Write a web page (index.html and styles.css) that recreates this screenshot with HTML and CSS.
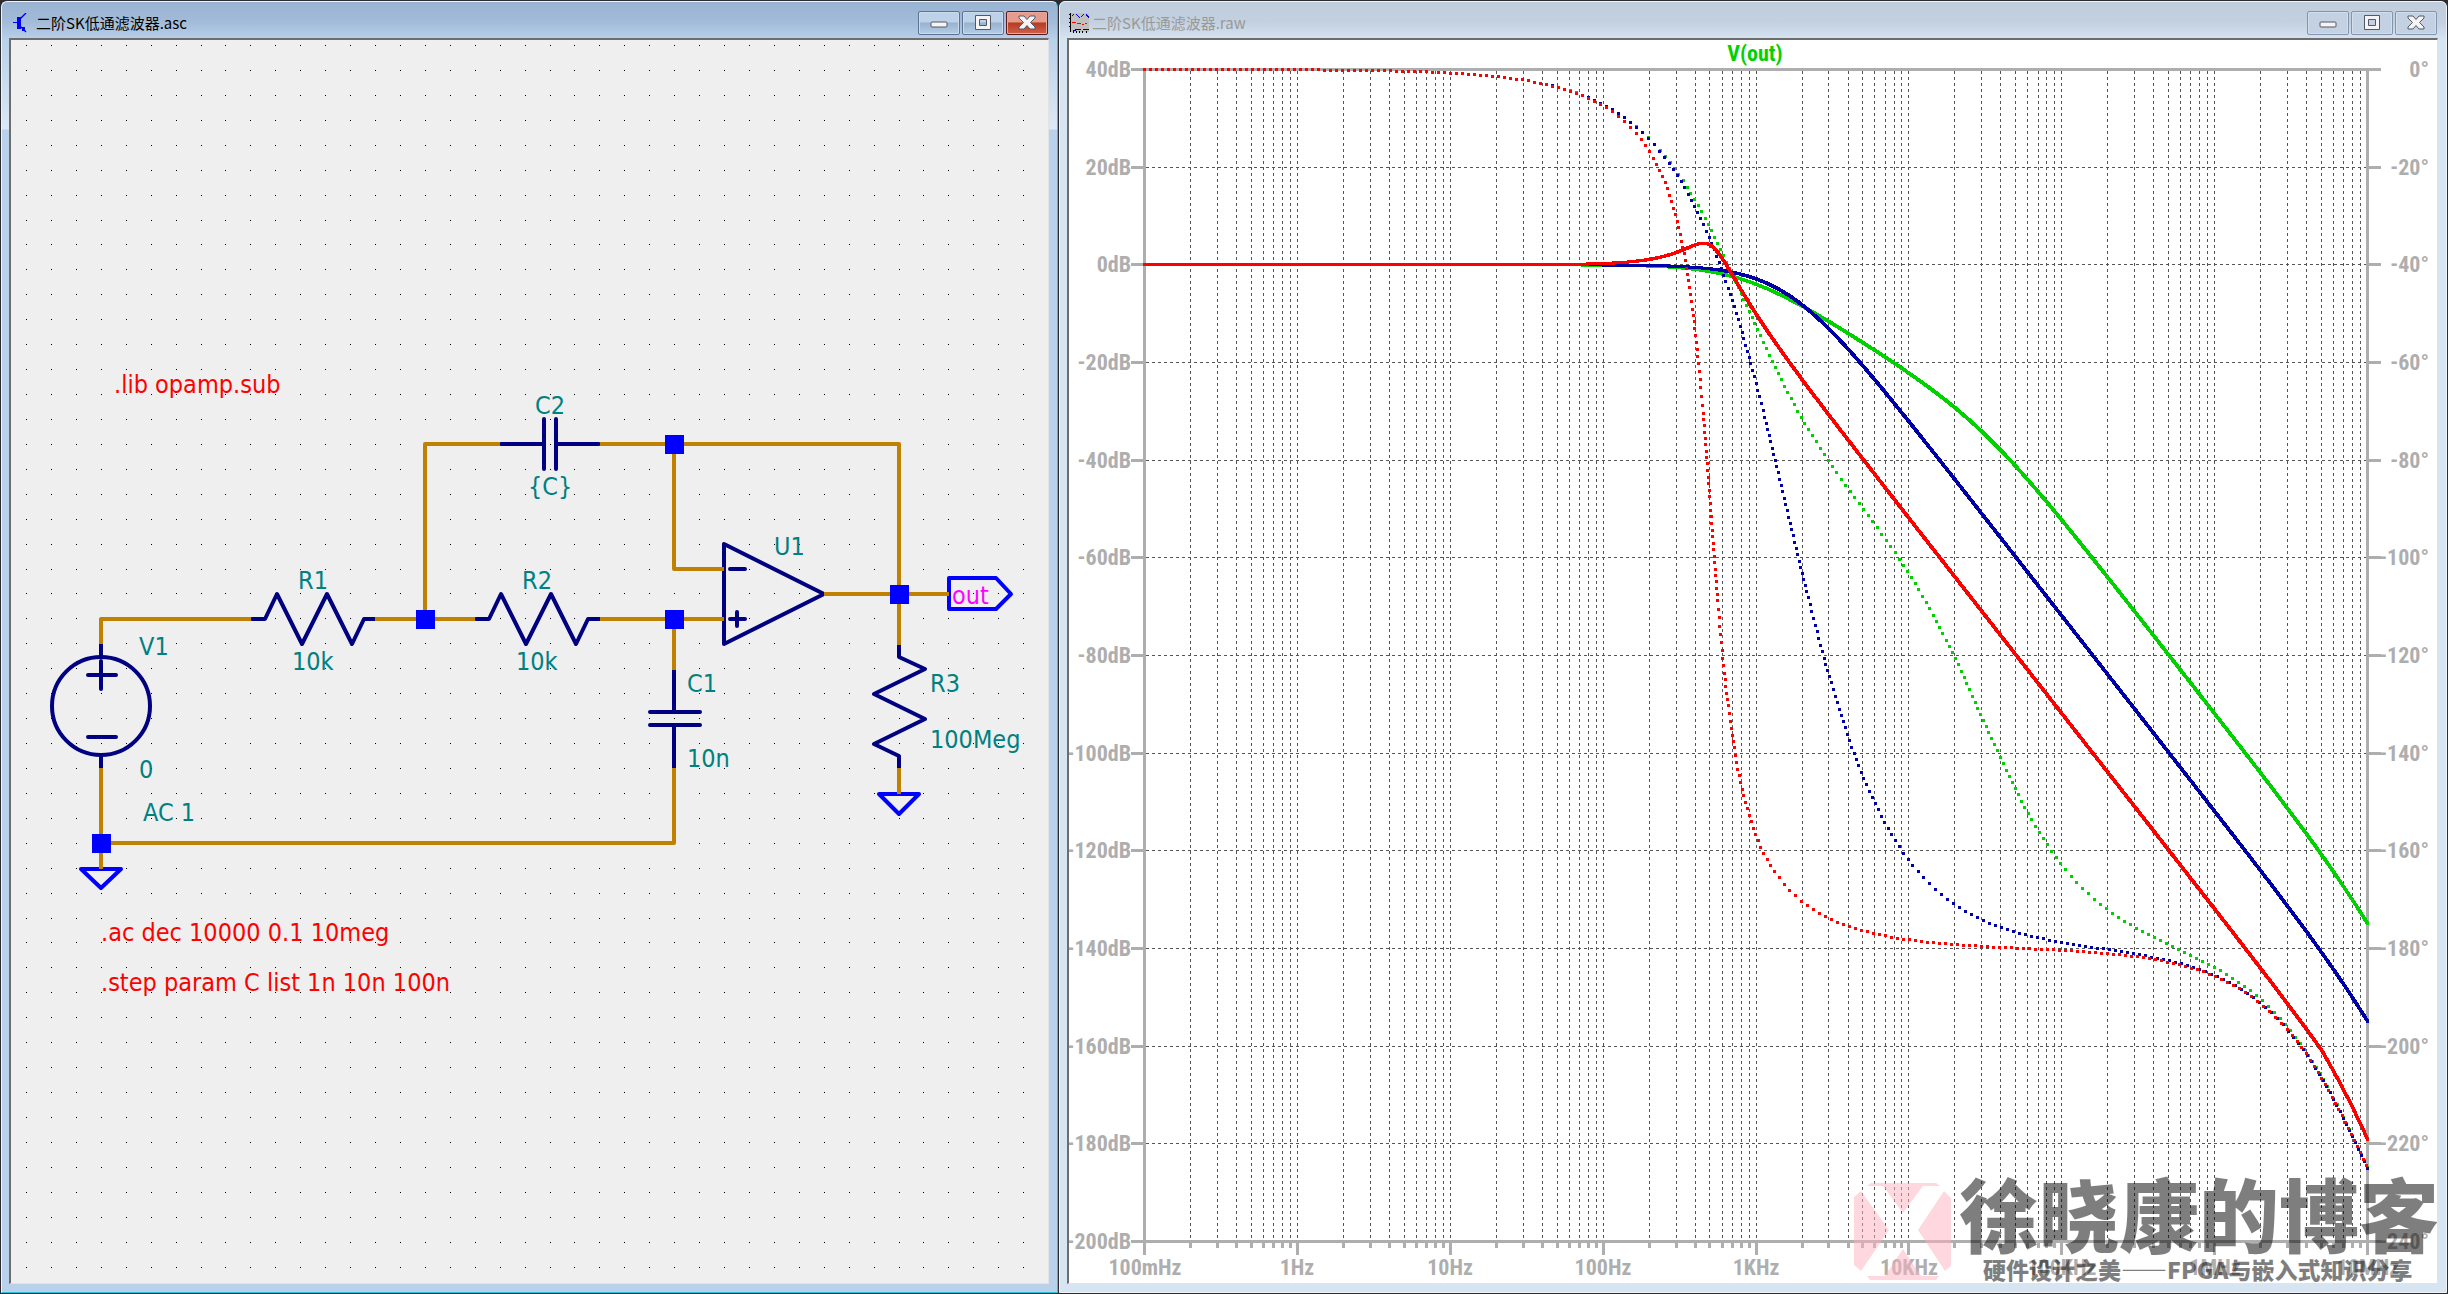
FILE: index.html
```html
<!DOCTYPE html>
<html lang="zh-CN">
<head>
<meta charset="utf-8">
<title>二阶SK低通滤波器</title>
<link rel="stylesheet" href="styles.css">
</head>
<body>
<main class="desktop">
  <section class="window window-active" aria-label="Schematic">
    <header class="titlebar">
      <svg class="title-icon" viewBox="0 0 20 20" aria-hidden="true"><path d="M4 4h4v12h-4zM0 9h4v1h-4z" fill="#00f"/><path d="M7 6l6-6M7 13l6 6" stroke="#00f" stroke-width="1.4" fill="none"/><path d="M9 14h3v4h-3z" fill="#00f"/></svg>
      <h1 class="title">二阶SK低通滤波器.asc</h1>
      <div class="controls">
        <button class="control" type="button" aria-label="Minimize"><svg viewBox="0 0 20 20"><rect class="glyph" x="2" y="9" width="16" height="5" rx="1"/></svg></button>
        <button class="control" type="button" aria-label="Maximize"><svg viewBox="0 0 20 20"><path class="glyph" fill-rule="evenodd" d="M2.500 2.500h15v14h-15zM6.500 6.500v6h7v-6z"/></svg></button>
        <button class="control control-close" type="button" aria-label="Close"><svg viewBox="0 0 20 20"><path class="glyph" d="M2 3h5l3 3.500 3-3.500h5v2l-4.500 4.500 4.500 4.500v2h-5l-3-3.500-3 3.500h-5v-2l4.500-4.500-4.500-4.500z"/></svg></button>
      </div>
    </header>
    <svg class="canvas schematic" viewBox="11 40 1037 1243" role="img" aria-label="Sallen-Key low-pass filter">
      <g id="dots"></g>
      <g class="symbol">
        <circle cx="101" cy="706" r="49"/>
        <path d="M101 644v13M101 755v13M88 675h28M101 661v28M88 737h28"/>
        <path d="M252 619h13l12-25 25 50 25-50 25 50 12-25h11"/>
        <path d="M476 619h13l12-25 25 50 25-50 25 50 12-25h12"/>
        <path d="M501 444h43M556 444h43M544 419v50M556 419v50"/>
        <path d="M674 670v42M674 725v43M650 712h50M650 725h50"/>
        <path d="M724 544v100l100-50z"/>
        <path d="M730 569h15M730 619h15M737 612v14"/>
        <path d="M899 645v12l26 12-51 25 51 25-51 25 25 12v13"/>
      </g>
      <g class="port">
        <path d="M81 869h40l-20 19z"/>
        <path d="M879 794h40l-20 20z"/>
        <path d="M949 578h47l15 16-15 15h-47z"/>
      </g>
      <g class="wire">
        <path d="M251 619H101V644M101 768V869M101 843H674V768M375 619H475M425 619V444H500M600 444H899V645M674 444V569H724M600 619H724M674 619V670M824 594H949M899 768V794"/>
      </g>
      <g class="junction">
        <rect x="416" y="610" width="19" height="19"/>
        <rect x="665" y="435" width="19" height="19"/>
        <rect x="665" y="610" width="19" height="19"/>
        <rect x="890" y="585" width="19" height="19"/>
        <rect x="92" y="834" width="19" height="19"/>
      </g>
      <g class="label">
        <text x="139" y="655">V1</text>
        <text x="139" y="778">0</text>
        <text x="143" y="821">AC 1</text>
        <text x="298" y="589">R1</text>
        <text x="292" y="670">10k</text>
        <text x="522" y="589">R2</text>
        <text x="516" y="670">10k</text>
        <text x="535" y="414">C2</text>
        <text x="528" y="495">{C}</text>
        <text x="774" y="555">U1</text>
        <text x="687" y="692">C1</text>
        <text x="687" y="767">10n</text>
        <text x="930" y="692">R3</text>
        <text x="930" y="748">100Meg</text>
      </g>
      <g class="directive">
        <text x="114" y="393">.lib opamp.sub</text>
        <text x="101" y="941">.ac dec 10000 0.1 10meg</text>
        <text x="101" y="991">.step param C list 1n 10n 100n</text>
      </g>
      <text class="net" x="952" y="604">out</text>
    </svg>
  </section>

  <section class="window" aria-label="Waveform">
    <header class="titlebar">
      <svg class="title-icon" viewBox="0 0 20 20" shape-rendering="crispEdges" aria-hidden="true"><rect x="1" width="19" height="19" fill="#c0c0c0"/><path d="M0 1h2v1h-2zM0 5h2v1h-2zM0 9h2v1h-2zM0 13h2v1h-2zM1 0h1v19h-1zM4 18h1v2h-1zM7 18h1v2h-1zM10 18h1v2h-1zM13 18h1v2h-1zM17 18h1v2h-1z" fill="#000"/><path d="M3 3l2-2M7 1l4 4M12 4l3-3M17 1l3 4" fill="none" stroke="#00f"/><path d="M3 9h4M8 10l4 1M13 11h2M16 11l2-1" fill="none" stroke="#f00"/><path d="M4 18l5-2h3M14 16h6" fill="none" stroke="#000080"/></svg>
      <h2 class="title">二阶SK低通滤波器.raw</h2>
      <div class="controls">
        <button class="control" type="button" aria-label="Minimize"><svg viewBox="0 0 20 20"><rect class="glyph" x="2" y="9" width="16" height="5" rx="1"/></svg></button>
        <button class="control" type="button" aria-label="Maximize"><svg viewBox="0 0 20 20"><path class="glyph" fill-rule="evenodd" d="M2.500 2.500h15v14h-15zM6.500 6.500v6h7v-6z"/></svg></button>
        <button class="control" type="button" aria-label="Close"><svg viewBox="0 0 20 20"><path class="glyph" d="M2 3h5l3 3.500 3-3.500h5v2l-4.500 4.500 4.500 4.500v2h-5l-3-3.500-3 3.500h-5v-2l4.500-4.500-4.500-4.500z"/></svg></button>
      </div>
    </header>
    <svg class="canvas plot" viewBox="1069 40 1368 1243" role="img" aria-label="V(out) magnitude and phase">
      <g id="grid" class="grid"></g>
      <g id="axis" class="axis"></g>
      <g id="ticks" class="tick-label"></g>
      <text class="trace-name" x="1755" y="61">V(out)</text>
      <g id="traces"></g>
      <g class="watermark-logo">
        <path d="M1867 1186l4-3h65l4 3h-17l-20 27-20-27zM1854 1197l7-6 28 39-28 41-7-6zM1944 1191l7 7v68l-6 5-27-41zM1903 1249l18 27h18l-3 4h-66l-3-4h18z"/>
      </g>
      <g class="watermark">
        <text class="watermark-name" x="1959" y="1246">徐晓康的博客</text>
        <text class="watermark-tag" x="1983" y="1279">硬件设计之美——FPGA与嵌入式知识分享</text>
      </g>
    </svg>
  </section>
</main>
<script src="plot.js"></script>
</body>
</html>
```
FILE: styles.css
```css
* {
  box-sizing: border-box;
}

body {
  margin: 0;
  background: #2b2b30;
}

.desktop {
  display: grid;
  grid-template-columns: 1057fr 1388fr;
  gap: 1px;
  padding: 1px;
}

.window {
  min-width: 0;
  padding: 0 8px 8px 7px;
  border: 1px solid #eef4fa;
  border-radius: 6px 6px 0 0;
  background: linear-gradient(#c0cddc, #c3d0df 20px, #d7e4f2 38px) no-repeat 0 0 / 100% 38px, #d7e4f2;
}

.window-active {
  border-color: #eef4fa #27c4dc #27c4dc #eef4fa;
  background: linear-gradient(#98b3d2, #a2bbd8 20px, #b9d1ea 38px) no-repeat 0 0 / 100% 38px,
    linear-gradient(#b9d1ea 38px, #dce8f5 127px, #b9d1ea 128px);
}

.titlebar {
  display: flex;
  align-items: flex-start;
  height: 36px;
  padding: 9px 1px 0 2px;
  gap: 3px;
}

.window-active .titlebar {
  padding-left: 4px;
}

.title-icon {
  width: 20px;
  height: 20px;
  margin-top: 2px;
}

.title {
  flex: 1;
  margin: 0;
  font: 15px/24px "Noto Sans CJK SC", sans-serif;
  color: #999;
  white-space: nowrap;
}

.window-active .title {
  color: #000;
}

.controls {
  display: flex;
  gap: 2px;
}

.control {
  display: grid;
  place-items: center;
  width: 42px;
  height: 24px;
  padding: 0;
  border: 1px solid #8394b0;
  border-radius: 2px;
  background: #c3d1e2;
  box-shadow: inset 0 0 0 1px #d3deeb;
}

.control svg {
  width: 20px;
  height: 20px;
}

.window-active .control {
  border-color: #5d7394;
  background: linear-gradient(#bdd2e8 45%, #98b2cf 50%, #b4cde6);
  box-shadow: inset 0 0 0 1px #c9dcef;
}

.window-active .control-close {
  border-color: #5a1a1e;
  background: linear-gradient(#e39c8e 45%, #b83a22 50%, #d2604a);
  box-shadow: inset 0 0 0 1px #e8a89c;
}

.glyph {
  fill: #f4f4f4;
  stroke: #535866;
}

.canvas {
  display: block;
  width: 100%;
  height: auto;
  border: solid;
  border-width: 2px 1px 1px 2px;
  border-color: #6d6d6d #e3e3e3 #e3e3e3 #6d6d6d;
  background: #fff;
}

.schematic {
  background: #efefef;
}

.dot {
  fill: #000;
  shape-rendering: crispEdges;
}

.symbol,
.port,
.wire {
  fill: none;
  stroke: #000080;
  stroke-width: 4px;
  stroke-linejoin: round;
  stroke-linecap: round;
}

.port {
  stroke: #00f;
}

.wire {
  stroke: #c08000;
  stroke-linecap: butt;
}

.junction {
  fill: #00f;
}

.label,
.directive,
.net {
  font: 25px "DejaVu Sans Condensed", "Noto Sans", sans-serif;
  fill: #008080;
}

.directive {
  fill: #f00;
}

.net {
  fill: #f0f;
}

.grid {
  stroke: #555;
  stroke-width: 1px;
  stroke-dasharray: 3 3;
  shape-rendering: crispEdges;
}

.axis {
  stroke: #aeaeae;
  stroke-width: 3px;
  shape-rendering: crispEdges;
}

.tick-label,
.trace-name {
  font: bold 22px "Roboto Condensed", "Liberation Sans", sans-serif;
  fill: #aeaeae;
}

.trace-name {
  fill: #00d200;
  text-anchor: middle;
}

.end {
  text-anchor: end;
}

.middle {
  text-anchor: middle;
}

.trace {
  shape-rendering: crispEdges;
}

.watermark-logo {
  fill: #ffb2c0;
  opacity: 0.5;
}

.watermark {
  opacity: 0.5;
  font-family: "Noto Sans CJK SC", sans-serif;
  font-weight: 900;
}

.watermark-name {
  font-size: 80px;
}

.watermark-tag {
  font-size: 23px;
}
```
FILE: plot.js
```js
const NS = 'http://www.w3.org/2000/svg';

function add(parent, tag, attrs, text) {
  const node = document.createElementNS(NS, tag);
  for (const key in attrs) node.setAttribute(key, attrs[key]);
  if (text) node.textContent = text;
  parent.appendChild(node);
  return node;
}

const byId = id => document.getElementById(id);

// Schematic grid dots
let dots = '';
for (let i = 0; i < 41; i++) {
  for (let j = 0; j < 50; j++) {
    dots += `M${Math.round(26 + i * 24.93)} ${Math.round(45 + j * 24.93)}h1v1h-1z`;
  }
}
add(byId('dots'), 'path', { class: 'dot', d: dots });

// Plot area
const left = 1144.5, right = 2367.5, top_ = 69.5, bottom = 1241.5;
const decade = (right - left) / 8;
const step = (bottom - top_) / 12;
const perUnit = step / 20;

let grid = '';
let axis = `M${left} ${top_}V1255M${right} ${top_}V1255M1131 ${top_}H2381M1131 ${bottom}H2381`;
for (let d = 0; d < 8; d++) {
  for (let m = 2; m <= 10; m++) {
    const x = Math.floor(left + (d + Math.log10(m)) * decade) + 0.5;
    if (x < right - 1) {
      grid += `M${x} 71V1240`;
      axis += `M${x} ${bottom}V${m === 10 ? 1255 : 1248}`;
    }
  }
}
const ticks = byId('ticks');
for (let i = 0; i <= 12; i++) {
  const y = Math.floor(top_ + i * step) + 0.5;
  if (i > 0 && i < 12) {
    grid += `M1146 ${y}H2366`;
    axis += `M1131 ${y}H${left}M${right} ${y}H2381`;
  }
  add(ticks, 'text', { class: 'end', x: 1131, y: y + 7.5 }, `${40 - 20 * i}dB`);
  add(ticks, 'text', { class: 'end', x: 2429, y: y + 7.5 }, `${-20 * i}°`);
}
add(byId('grid'), 'path', { d: grid });
add(byId('axis'), 'path', { d: axis });
['100mHz', '1Hz', '10Hz', '100Hz', '1KHz', '10KHz', '100KHz', '1MHz', '10MHz'].forEach((name, i) => {
  add(ticks, 'text', { class: 'middle', x: Math.round(left + i * decade), y: 1275 }, name);
});

// Unity-gain Sallen-Key response with a 10 MHz op amp
const R = 1e4, C1 = 1e-8, GBW = 1e7, AOL = 1e5;

function response(f, c2) {
  const w = 2 * Math.PI * f;
  // 1/A = 1/AOL + jf/GBW ; K = 1/(1 + 1/A)
  const kr0 = 1 + 1 / AOL, ki0 = f / GBW;
  const kd = kr0 * kr0 + ki0 * ki0;
  const kr = kr0 / kd, ki = -ki0 / kd;
  const re = 1 - w * w * R * R * C1 * c2 + w * R * c2 * ki;
  const im = w * (2 * R * C1 + R * c2 * (1 - kr));
  let phase = Math.atan2(ki, kr) - Math.atan2(im, re);
  phase *= 180 / Math.PI;
  if (phase > 10) phase -= 360;
  let db = -20 * Math.log10(Math.hypot(re, im)) - 10 * Math.log10(kd);
  if (c2 > 5e-8) db -= Math.max(0, (f - 5e6) / 5e6 * 4.2);
  return { db, phase };
}

// Square 3px pen: solid for magnitude, every 6px for phase
const pen = (x, y) => `M${Math.round(x - 1.5)} ${Math.round(y - 1.5)}h3v3h-3z`;

const runs = [[1e-9, '#00d200'], [1e-8, '#0000a8'], [1e-7, '#ff0000']];
for (const [c2, color] of runs) {
  let line = '', squares = '', lastX = -99, lastY = -99;
  for (let x = left; x <= right; x += 0.25) {
    const { db, phase } = response(0.1 * 10 ** ((x - left) / decade), c2);
    if (x % 0.5 === 0) line += pen(x, top_ + (40 - db) * perUnit);
    const y = top_ - phase * perUnit;
    if (Math.max(x - lastX, Math.abs(y - lastY)) >= 6) {
      squares += pen(x, y);
      lastX = x;
      lastY = y;
    }
  }
  add(byId('traces'), 'path', { class: 'trace', d: squares, fill: color });
  add(byId('traces'), 'path', { class: 'trace', d: line, fill: color });
}
```
